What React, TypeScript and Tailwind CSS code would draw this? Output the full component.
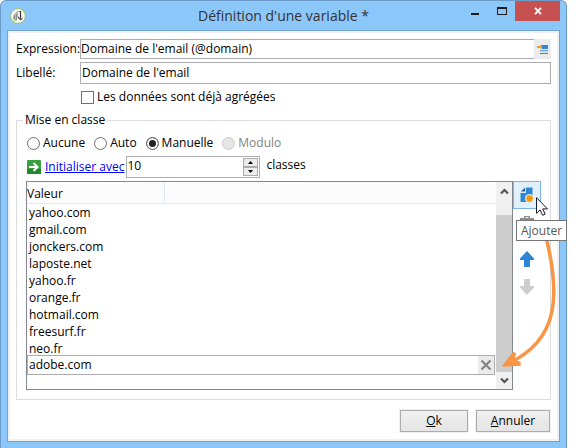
import React from "react";

const domains = [
  "yahoo.com",
  "gmail.com",
  "jonckers.com",
  "laposte.net",
  "yahoo.fr",
  "orange.fr",
  "hotmail.com",
  "freesurf.fr",
  "neo.fr",
];

function AppLogo() {
  return (
    <svg className="h-4 w-4" viewBox="0 0 16 16" aria-hidden="true">
      <circle cx="8" cy="8" r="7.4" fill="#fbfcf6" stroke="#9cc05c" strokeWidth="1" />
      <path d="M3 7.500L6.500 3.500H8V8L6.500 13H5L3 11z" fill="#b9b9b5" />
      <path d="M4.500 7.500v4M6.500 6v6" stroke="#8d8d89" strokeWidth="1" fill="none" />
      <path d="M7.500 3.500H10" stroke="#999" strokeWidth="1" />
      <path d="M10.500 3v8" stroke="#3d3d3d" strokeWidth="1.300" fill="none" />
      <path d="M8 8l2.500 3.500L12.500 9.500V11l-2 1.500L8 10z" fill="#444" />
    </svg>
  );
}

function TitleBar() {
  return (
    <header className="relative flex h-[29px] items-start justify-between pl-[9px] pr-[6px]">
      <div className="flex h-[29px] items-center">
        <AppLogo />
      </div>
      <h1 className="absolute inset-x-0 top-1 text-center text-[14px] leading-[22px] text-[#333]">
        Définition d'une variable *
      </h1>
      <div className="relative flex">
        <button aria-label="Réduire" className="flex h-5 w-[27px] items-center justify-center">
          <svg className="h-3 w-3" viewBox="0 0 12 12">
            <path d="M2 8h8v2H2z" fill="#1c1c1c" />
          </svg>
        </button>
        <button aria-label="Agrandir" className="flex h-5 w-[27px] items-center justify-center">
          <svg className="h-3 w-3" viewBox="0 0 12 12">
            <path d="M1 2h10v8H1zM2 4v5h8V4z" fill="#1c1c1c" fillRule="evenodd" />
          </svg>
        </button>
        <button aria-label="Fermer" className="flex h-5 w-[45px] items-center justify-center bg-[#c75050]">
          <svg className="h-2 w-2" viewBox="0 0 8 8">
            <path d="M1 .8l6 6.4M7 .8L1 7.200" stroke="#fff" strokeWidth="1.8" />
          </svg>
        </button>
      </div>
    </header>
  );
}

function Radio({ label, checked, disabled }: { label: string; checked?: boolean; disabled?: boolean }) {
  return (
    <label className={disabled ? "flex items-center gap-[3px] text-[#838383]" : "flex items-center gap-[3px]"}>
      <input
        type="radio"
        name="classing"
        defaultChecked={checked}
        disabled={disabled}
        className="h-[13px] w-[13px] appearance-none rounded-full border border-[#707070] bg-white checked:bg-[#222] checked:shadow-[inset_0_0_0_2px_white] disabled:border-[#ccc] disabled:bg-[#e6e6e6]"
      />
      {label}
    </label>
  );
}

function SpinButton({ up }: { up?: boolean }) {
  return (
    <button
      aria-label={up ? "Augmenter" : "Diminuer"}
      className="flex h-[9px] w-[15px] items-center justify-center border border-[#acacac] bg-[#ececec]"
    >
      <svg className="h-[3px] w-[5px]" viewBox="0 0 5 3">
        <path d={up ? "M0 3L2.500 0L5 3z" : "M0 0L2.500 3L5 0z"} fill="#000" />
      </svg>
    </button>
  );
}

function Scrollbar() {
  return (
    <div className="flex w-4 flex-col bg-[#f0f0f0]">
      <button aria-label="Défiler vers le haut" className="flex h-[33px] items-start justify-center pt-1.5">
        <svg className="h-[7px] w-[9px]" viewBox="0 0 9 7">
          <path d="M1 5.500L4.500 2L8 5.500" fill="none" stroke="#555" strokeWidth="2.200" />
        </svg>
      </button>
      <div className="flex-1 bg-[#cdcdcd]" />
      <button aria-label="Défiler vers le bas" className="flex h-[17px] items-center justify-center">
        <svg className="h-[7px] w-[9px]" viewBox="0 0 9 7">
          <path d="M1 1.500L4.500 5L8 1.500" fill="none" stroke="#555" strokeWidth="2.200" />
        </svg>
      </button>
    </div>
  );
}

function ValueList() {
  return (
    <div className="flex flex-1 border border-[#828790]">
      <div className="mr-px min-w-0 flex-1 pb-[14px]">
        <table className="w-full table-fixed border-separate border-spacing-0 text-left">
          <thead>
            <tr className="h-[22px] bg-[#fcfcfc]">
              <th className="w-[138px] border-b border-r border-[#dfebfa] p-0 pt-0.5 font-normal">Valeur</th>
              <th className="border-b border-[#dfebfa] p-0" />
            </tr>
          </thead>
          <tbody>
            {domains.map((d) => (
              <tr key={d}>
                <td colSpan={2} className="h-[17px] p-0 pl-0.5 leading-[17px]">
                  {d}
                </td>
              </tr>
            ))}
          </tbody>
        </table>
        <div className="-mt-0.5 flex h-5 border border-[#abadb3] bg-white">
          <input
            aria-label="Valeur"
            defaultValue="adobe.com"
            className="min-w-0 flex-1 pl-px outline-none"
          />
          <button aria-label="Effacer" className="flex w-4 items-center justify-center bg-[#ebebeb]">
            <svg className="h-3 w-3" viewBox="0 0 12 12">
              <path d="M1.500 1.500l9 9M10.500 1.500l-9 9" stroke="#858585" strokeWidth="2.200" />
            </svg>
          </button>
        </div>
      </div>
      <Scrollbar />
    </div>
  );
}

function Toolbar() {
  return (
    <div className="relative flex w-7 flex-col">
      <button
        aria-label="Ajouter"
        className="flex h-7 items-center justify-center border border-[#7eb4ea] bg-[#e0f0fd]"
      >
        <svg className="h-4 w-4" viewBox="0 0 16 16">
          <path d="M7 .5h6.500V9H8v6H1.500V6H7z" fill="#2e86d4" />
          <path d="M2 4.500L6 .5v4z" fill="#1d5f9f" />
          <circle cx="10.500" cy="11.500" r="4.600" fill="#e0f0fd" />
          <circle cx="10.500" cy="11.500" r="3" fill="#f39a0c" />
          <path d="M10.500 7.500v8M6.500 11.500h8M7.700 8.700l5.600 5.600M13.300 8.700l-5.600 5.600" stroke="#f39a0c" strokeWidth="1.200" />
        </svg>
      </button>
      <button aria-label="Supprimer" className="flex h-8 items-center justify-center">
        <svg className="h-5 w-4" viewBox="0 0 16 20">
          <path d="M5 3V1h6v2M1 3h14v3H1z" fill="#8e8e8e" />
          <path d="M6.500 2h3v1h-3z" fill="#fff" />
          <path d="M2.500 7h11v12h-11z" fill="#9b9b9b" />
        </svg>
      </button>
      <button aria-label="Monter" className="flex h-9 items-center justify-center">
        <svg className="h-4 w-[14px]" viewBox="0 0 14 16">
          <path d="M7 0l7 7.500v1.500H10v7H4V9H0V7.500z" fill="#2e86d4" />
        </svg>
      </button>
      <button aria-label="Descendre" className="flex h-5 items-center justify-center">
        <svg className="h-4 w-[14px]" viewBox="0 0 14 16">
          <path d="M7 16l7-7.500V7H10V0H4v7H0v1.500z" fill="#cdcdcd" />
        </svg>
      </button>

      <svg className="absolute -left-4 top-[58px] h-[136px] w-[62px]" viewBox="0 0 62 136" aria-hidden="true">
        <path d="M49.500 0C62 52 64 100 12 124" fill="none" stroke="#f79646" strokeWidth="3.600" />
        <path d="M6 127L16.500 113.500l2 1.500L16 121l7 2.500V126z" fill="#f79646" stroke="#f79646" strokeWidth="1.500" strokeLinejoin="round" />
      </svg>
      <div
        role="tooltip"
        className="absolute left-[3px] top-[39px] flex h-[21px] w-[51px] items-center justify-center border border-[#767676] bg-white text-[#575757]"
      >
        Ajouter
      </div>
      <svg className="absolute left-[23px] top-4 h-[19px] w-3" viewBox="0 0 12 19" aria-hidden="true">
        <path d="M.5.7v15.600l3.600-3.400 2.500 5.400 2.600-1.200-2.500-5.200h4.800z" fill="#fff" stroke="#1b1b2b" strokeWidth="1" />
      </svg>
    </div>
  );
}

export default function App() {
  return (
    <div className="min-h-screen bg-white pr-[13px] font-['Open_Sans','Noto_Sans',sans-serif] text-[12px] leading-[18px] text-black">
      <div className="flex min-h-screen flex-col rounded-t-md border-x border-t border-[#6c9bc9] bg-[#8cc7fa]">
        <TitleBar />
        <main className="mx-[6px] mb-[6px] flex flex-1 flex-col border border-[#71a3d3] bg-white">
          <form
            className="flex flex-1 flex-col border-2 border-[#f0f0f0] px-[6px] pb-[6px] pt-[6px]"
            onSubmit={(e) => e.preventDefault()}
          >
            <div className="flex items-center">
              <label htmlFor="expression" className="w-16 shrink-0">
                Expression:
              </label>
              <div className="flex h-5 flex-1">
                <input
                  id="expression"
                  defaultValue="Domaine de l'email (@domain)"
                  className="min-w-0 flex-1 border border-r-0 border-[#abadb3] outline-none"
                />
                <button aria-label="Modifier l'expression" className="flex w-[17px] items-center justify-center bg-[#ebebeb]">
                  <svg className="h-[11px] w-[11px]" viewBox="0 0 11 11">
                    <path d="M4 1h7v4H5z" fill="#2e86d4" />
                    <path d="M3 6h8v1H3z" fill="#6ba6de" />
                    <path d="M3 7h8v1H3z" fill="#b9d4ef" />
                    <path d="M3 9h8v1H3z" fill="#2e86d4" />
                    <path d="M0 2h3V.8L5.500 3 3 5.200V4H0z" fill="#f0a030" />
                  </svg>
                </button>
              </div>
            </div>
            <div className="mt-[3px] flex items-center">
              <label htmlFor="label" className="w-16 shrink-0">
                Libellé:
              </label>
              <input
                id="label"
                defaultValue="Domaine de l'email"
                className="h-[22px] min-w-0 flex-1 border border-[#abadb3] pb-0.5 pl-px outline-none"
              />
            </div>
            <label className="ml-[65px] mt-1 flex items-center gap-[3px] self-start">
              <input type="checkbox" className="h-[13px] w-[13px] appearance-none border border-[#707070] bg-white" />
              Les données sont déjà agrégées
            </label>

            <fieldset className="mt-[5px] min-w-0 border border-[#dcdcdc] pb-[9px] pl-[9px] pr-[9px]">
              <legend className="-ml-[3px] px-[2px]">Mise en classe</legend>
              <div className="flex h-6 items-center gap-[9px] pl-px pt-1">
                <Radio label="Aucune" />
                <Radio label="Auto" />
                <Radio label="Manuelle" checked />
                <Radio label="Modulo" disabled />
              </div>
              <div className="mt-[3px] flex items-center pl-px">
                <svg className="h-[14px] w-[14px]" viewBox="0 0 14 14" aria-hidden="true">
                  <rect width="14" height="14" rx="1" fill="#38a03f" />
                  <path d="M0 9h14v5H0z" fill="#23862f" />
                  <path d="M2 7h8M6.500 3L10.500 7l-4 4" fill="none" stroke="#fff" strokeWidth="2" />
                </svg>
                <a href="#" className="ml-1 text-[#0000ff] underline">
                  Initialiser avec
                </a>
                <div className="ml-0.5 flex h-[22px] w-[134px] border border-[#abadb3] pr-px pt-px">
                  <input
                    aria-label="Nombre de classes"
                    defaultValue="10"
                    className="h-4 min-w-0 flex-1 outline-none"
                  />
                  <div className="flex flex-col">
                    <SpinButton up />
                    <SpinButton />
                  </div>
                </div>
                <span className="ml-[6px] pb-1">classes</span>
              </div>
              <div className="mt-[3px] flex">
                <ValueList />
                <Toolbar />
              </div>
            </fieldset>

            <div className="mt-[10px] flex justify-end gap-2 pr-px">
              <button className="h-[22px] w-[68px] border border-[#acacac] bg-linear-to-b from-[#f0f0f0] to-[#e5e5e5] shadow-[0_0_0_1px_#f0f0f0]">
                <span className="underline">O</span>k
              </button>
              <button className="h-[22px] w-[74px] border border-[#acacac] bg-linear-to-b from-[#f0f0f0] to-[#e5e5e5] shadow-[0_0_0_1px_#f0f0f0]">
                <span className="underline">A</span>nnuler
              </button>
            </div>
          </form>
        </main>
      </div>
    </div>
  );
}
